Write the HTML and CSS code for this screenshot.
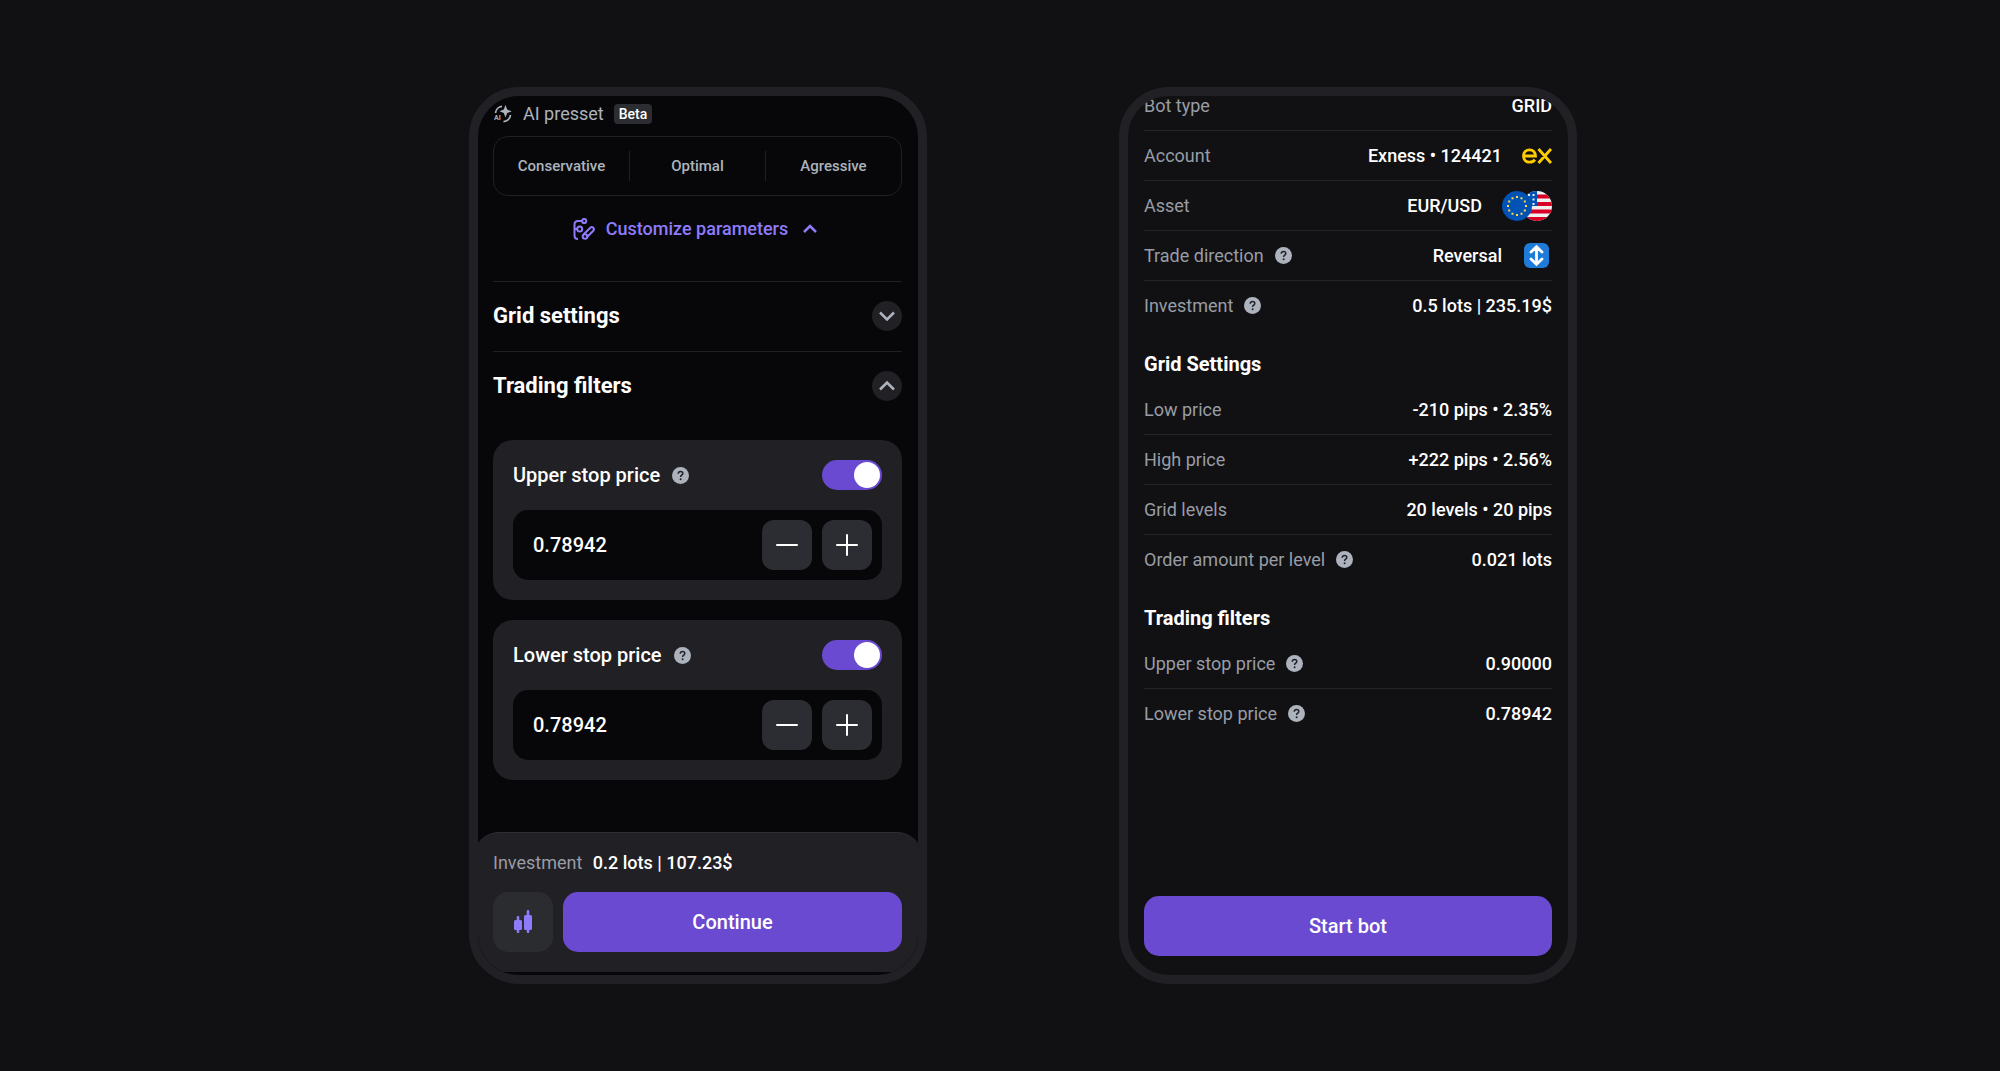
FILE: index.html
```
<!DOCTYPE html>
<html lang="en">
<head>
  <meta charset="UTF-8" />
  <meta name="viewport" content="width=device-width, initial-scale=1.0"/>
  <title>Grid bot setup</title>
  <link rel="stylesheet" href="styles.css">
</head>
<body>
  <!-- shared icons -->
  <svg class="sprite" aria-hidden="true">
    <symbol id="help" viewBox="0 0 17 17">
      <circle cx="8.500" cy="8.500" r="8.500" fill="#adb3bd"/>
      <path d="M6.200 6.700C6.200 5.200 7.200 4.400 8.500 4.400S10.800 5.200 10.800 6.500C10.800 8.200 8.600 8.200 8.600 9.900" fill="none" stroke="#222125" stroke-width="1.500"/>
      <circle cx="8.600" cy="12.200" r="1" fill="#222125"/>
    </symbol>
    <symbol id="minus" viewBox="0 0 22 22">
      <path d="M1 11H21" fill="none" stroke="currentColor" stroke-width="2" stroke-linecap="round"/>
    </symbol>
    <symbol id="plus" viewBox="0 0 22 22">
      <path d="M1 11H21M11 1V21" fill="none" stroke="currentColor" stroke-width="2" stroke-linecap="round"/>
    </symbol>
  </svg>

  <main class="screens">
    <section class="phone phone-setup">
      <div class="setup">
        <div class="preset-title">
          <svg class="ai-icon" viewBox="0 0 18 18" aria-hidden="true">
            <path d="M1.500 8A7.200 7.200 0 0 1 8 1.400M16.500 10A7.200 7.200 0 0 1 9.500 16.600" fill="none" stroke="currentColor" stroke-width="1.700"/>
            <path d="M11.500 0L13.200 4.600L17.800 6.300L13.200 8L11.500 12.600L9.800 8L5.500 6.300L9.800 4.600Z" fill="currentColor"/>
            <text x="0" y="15" font-size="7" font-weight="700" fill="currentColor">AI</text>
          </svg>
          <span>AI presset</span>
          <span class="badge">Beta</span>
        </div>

        <div class="presets">
          <button type="button">Conservative</button>
          <button type="button">Optimal</button>
          <button type="button">Agressive</button>
        </div>

        <button type="button" class="customize">
          <svg class="customize-icon" viewBox="0 0 22 22" fill="none" stroke="currentColor" stroke-width="2" aria-hidden="true">
            <path d="M9 3H5Q1.500 3 1.500 6.500V17.500Q1.500 21 5 21M1.500 11H4"/>
            <circle cx="11.200" cy="3" r="2.100"/>
            <circle cx="6.700" cy="11" r="2.500"/>
            <path d="M10.700 16.300L17.300 9.700Q18.800 8.400 20.200 9.800T20.300 12.800L13.800 19.300"/>
            <circle cx="12" cy="18.500" r="2.300"/>
          </svg>
          <span>Customize parameters</span>
          <svg class="caret" viewBox="0 0 24 24" fill="none" stroke="currentColor" stroke-width="2.500" aria-hidden="true"><path d="M6 15L12 9L18 15"/></svg>
        </button>

        <div class="accordion">
          <h2>Grid settings</h2>
          <button type="button" class="round" aria-label="Expand grid settings">
            <svg viewBox="0 0 16 16" fill="none" stroke="currentColor" stroke-width="2.500" aria-hidden="true"><path d="M1 4.500L8 11.500L15 4.500"/></svg>
          </button>
        </div>
        <div class="accordion">
          <h2>Trading filters</h2>
          <button type="button" class="round" aria-label="Collapse trading filters">
            <svg viewBox="0 0 16 16" fill="none" stroke="currentColor" stroke-width="2.500" aria-hidden="true"><path d="M1 11.500L8 4.500L15 11.500"/></svg>
          </button>
        </div>

        <div class="filters">
          <div class="card">
            <div class="card-head">
              <label for="upperOn">Upper stop price</label>
              <svg class="help"><use href="#help"/></svg>
              <input type="checkbox" id="upperOn" class="toggle" checked>
            </div>
            <div class="stepper">
              <input type="text" value="0.78942" aria-label="Upper stop price value">
              <button type="button" aria-label="Decrease"><svg><use href="#minus"/></svg></button>
              <button type="button" aria-label="Increase"><svg><use href="#plus"/></svg></button>
            </div>
          </div>
          <div class="card">
            <div class="card-head">
              <label for="lowerOn">Lower stop price</label>
              <svg class="help"><use href="#help"/></svg>
              <input type="checkbox" id="lowerOn" class="toggle" checked>
            </div>
            <div class="stepper">
              <input type="text" value="0.78942" aria-label="Lower stop price value">
              <button type="button" aria-label="Decrease"><svg><use href="#minus"/></svg></button>
              <button type="button" aria-label="Increase"><svg><use href="#plus"/></svg></button>
            </div>
          </div>
        </div>
      </div>

      <footer class="bottom-bar">
        <p><span>Investment</span> <strong>0.2 lots | 107.23$</strong></p>
        <div class="actions">
          <button type="button" class="chart" aria-label="Chart">
            <svg viewBox="0 0 18 24" fill="currentColor" aria-hidden="true">
              <rect x="0" y="10" width="8" height="10" rx="1.500"/>
              <rect x="2.700" y="6" width="2.600" height="17" rx="1"/>
              <rect x="10" y="5" width="8" height="15" rx="1.500"/>
              <rect x="12.700" y="0" width="2.600" height="23" rx="1"/>
            </svg>
          </button>
          <button type="button" class="primary">Continue</button>
        </div>
      </footer>
    </section>

    <section class="phone phone-summary">
      <dl class="summary">
        <div><dt>Bot type</dt><dd>GRID</dd></div>
        <div>
          <dt>Account</dt>
          <dd>Exness • 124421
            <svg class="ex-logo" viewBox="0 0 30 16" fill="none" stroke="#fc0" stroke-width="2.800" role="img" aria-label="Exness">
              <path d="M1.500 8H13.500C13.500 4 11 1.800 7.500 1.800S1.500 4.500 1.500 8S4 14.200 7.500 14.200C9.900 14.200 11.700 13.300 12.900 11.600M16.500 1L29 15M29 1L16.500 15"/>
            </svg>
          </dd>
        </div>
        <div>
          <dt>Asset</dt>
          <dd>EUR/USD
            <svg class="flags" viewBox="0 0 50 30" aria-hidden="true">
              <clipPath id="usd"><circle cx="35" cy="15" r="15"/></clipPath>
              <g clip-path="url(#usd)">
                <path fill="#f0f0f0" d="M20 0H50V30H20z"/>
                <path stroke="#d80027" stroke-width="3.800" d="M20 5.500H50M20 13H50M20 20.500H50M20 28H50"/>
                <path fill="#0052b4" d="M20 0H35V15H20z"/>
                <path stroke="#f0f0f0" stroke-width="2" stroke-dasharray="2 2.500" d="M27 3V14M31.500 3V14"/>
              </g>
              <circle cx="15" cy="15" r="15" fill="#0052b4"/>
              <g fill="#ffda44">
                <path d="M14 5h2v2h-2zM14 23h2v2h-2zM5 14h2v2h-2zM23 14h2v2h-2zM9.500 6.200h2v2h-2zM18.500 6.200h2v2h-2zM9.500 21.800h2v2h-2zM18.500 21.800h2v2h-2zM6.200 9.500h2v2h-2zM21.800 9.500h2v2h-2zM6.200 18.500h2v2h-2zM21.800 18.500h2v2h-2z"/>
              </g>
            </svg>
          </dd>
        </div>
        <div>
          <dt>Trade direction <svg class="help"><use href="#help"/></svg></dt>
          <dd>Reversal
            <svg class="direction" viewBox="0 0 30 26" aria-hidden="true">
              <rect x="2" y="0" width="25" height="25" rx="6" fill="#1f7bd8"/>
              <path d="M14.500 4V21M9 9L14.500 3.800L20 9M9 16L14.500 21.200L20 16" fill="none" stroke="#fff" stroke-width="2.800" stroke-linecap="round"/>
            </svg>
          </dd>
        </div>
        <div><dt>Investment <svg class="help"><use href="#help"/></svg></dt><dd>0.5 lots | 235.19$</dd></div>
      </dl>

      <h3>Grid Settings</h3>
      <dl class="summary">
        <div><dt>Low price</dt><dd>-210 pips • 2.35%</dd></div>
        <div><dt>High price</dt><dd>+222 pips • 2.56%</dd></div>
        <div><dt>Grid levels</dt><dd>20 levels • 20 pips</dd></div>
        <div><dt>Order amount per level <svg class="help"><use href="#help"/></svg></dt><dd>0.021 lots</dd></div>
      </dl>

      <h3>Trading filters</h3>
      <dl class="summary">
        <div><dt>Upper stop price <svg class="help"><use href="#help"/></svg></dt><dd>0.90000</dd></div>
        <div><dt>Lower stop price <svg class="help"><use href="#help"/></svg></dt><dd>0.78942</dd></div>
      </dl>

      <button type="button" class="primary start">Start bot</button>
    </section>
  </main>
</body>
</html>
```
FILE: styles.css
```
:root {
  --page: #111113;
  --screen: #070709;
  --surface: #212024;
  --control: #2c2d32;
  --line: #202023;
  --primary: #6a4ad0;
  --accent: #8e7bfa;
  --text: #ffffff;
  --soft: #adb3bd;
  --muted: #989da6;
}

* {
  margin: 0;
  padding: 0;
  box-sizing: border-box;
}

body {
  background: var(--page);
  color: var(--text);
  font-family: Roboto, sans-serif;
  font-size: 18px;
  line-height: 24px;
}

button,
input {
  font: inherit;
  color: inherit;
  border: none;
  background: none;
}

button {
  cursor: pointer;
}

svg {
  display: block;
  flex-shrink: 0;
}

.sprite {
  position: absolute;
  width: 0;
  height: 0;
}

.screens {
  min-height: 100vh;
  display: flex;
  justify-content: center;
  gap: 192px;
  padding: 87px 0 87px 46px;
}

.phone {
  width: 458px;
  border: 9px solid var(--surface);
  border-radius: 50px;
  overflow: hidden;
  display: flex;
  flex-direction: column;
}

.help {
  width: 17px;
  height: 17px;
}

.primary {
  height: 60px;
  border-radius: 15px;
  background: var(--primary);
  font-size: 20px;
  font-weight: 500;
}

/* setup screen */
.phone-setup {
  background: var(--screen);
}

.setup {
  padding: 8px 16px 40px 15px;
}

.preset-title {
  display: flex;
  align-items: center;
  height: 20px;
  color: var(--soft);
}

.ai-icon {
  width: 18px;
  height: 18px;
  margin: 0 11px 0 1px;
}

.badge {
  margin-left: 10px;
  padding: 0 5px;
  border-radius: 4px;
  background: var(--control);
  color: var(--text);
  font-size: 14px;
  font-weight: 500;
  line-height: 20px;
}

.presets {
  display: flex;
  align-items: center;
  height: 60px;
  margin-top: 12px;
  border: 1px solid var(--line);
  border-radius: 15px;
}

.presets button {
  flex: 1;
  height: 30px;
  color: var(--soft);
  font-size: 15px;
  font-weight: 500;
}

.presets button + button {
  border-left: 1px solid var(--line);
}

.customize {
  display: flex;
  align-items: center;
  justify-content: center;
  width: 100%;
  height: 30px;
  margin: 18px 0 37px;
  color: var(--accent);
  font-weight: 500;
}

.customize-icon {
  width: 22px;
  height: 22px;
  margin-right: 11px;
}

.caret {
  width: 24px;
  height: 24px;
  margin-left: 10px;
}

.accordion {
  display: flex;
  align-items: center;
  justify-content: space-between;
  padding: 19px 0 20px;
  border-top: 1px solid var(--line);
}

.accordion h2 {
  font-size: 22px;
  font-weight: 700;
}

.round {
  display: grid;
  place-items: center;
  width: 30px;
  height: 30px;
  border-radius: 50%;
  background: var(--surface);
  color: var(--soft);
}

.round svg {
  width: 16px;
  height: 16px;
}

.filters {
  display: flex;
  flex-direction: column;
  gap: 20px;
  margin-top: 19px;
}

.card {
  padding: 20px;
  border-radius: 20px;
  background: var(--surface);
}

.card-head {
  display: flex;
  align-items: center;
  gap: 12px;
  font-size: 20px;
  font-weight: 500;
}

.toggle {
  appearance: none;
  width: 60px;
  height: 30px;
  margin-left: auto;
  padding: 2px;
  border-radius: 15px;
  background: var(--control);
  cursor: pointer;
}

.toggle::before {
  content: "";
  display: block;
  width: 26px;
  height: 26px;
  border-radius: 50%;
  background: #fff;
}

.toggle:checked {
  background: var(--primary);
}

.toggle:checked::before {
  margin-left: auto;
}

.stepper {
  display: flex;
  align-items: center;
  gap: 10px;
  margin-top: 20px;
  padding: 10px 10px 10px 20px;
  border-radius: 15px;
  background: var(--screen);
  font-size: 20px;
  font-weight: 500;
}

.stepper input {
  flex: 1;
  min-width: 0;
  outline: none;
}

.stepper button {
  display: grid;
  place-items: center;
  width: 50px;
  height: 50px;
  border-radius: 12px;
  background: var(--control);
}

.stepper svg {
  width: 22px;
  height: 22px;
}

/* wider than the screen so the corners start under the frame */
.bottom-bar {
  margin: auto -4px 3px;
  padding: 18px 20px 20px 19px;
  border-top: 1px solid #2f2f33;
  border-radius: 25px 25px 0 0;
  background: var(--surface);
}

.bottom-bar p {
  color: var(--muted);
}

.bottom-bar strong {
  margin-left: 6px;
  color: var(--text);
  font-weight: 500;
}

.actions {
  display: flex;
  gap: 10px;
  margin-top: 17px;
}

.actions .primary {
  flex: 1;
}

.chart {
  display: grid;
  place-items: center;
  width: 60px;
  height: 60px;
  border-radius: 15px;
  background: #2b2c30;
  color: var(--accent);
}

.chart svg {
  width: 18px;
  height: 24px;
}

/* summary screen, scrolled down a little */
.phone-summary {
  padding: 0 16px 19px;
}

.summary:first-child {
  margin-top: -15px;
}

.summary div {
  display: flex;
  align-items: center;
  justify-content: space-between;
  height: 50px;
  border-bottom: 1px solid #252528;
}

.summary div:last-child {
  border-bottom-color: transparent;
}

.summary dt {
  display: flex;
  align-items: center;
  gap: 11px;
  color: var(--muted);
}

.summary dd {
  display: flex;
  align-items: center;
  gap: 20px;
  font-weight: 500;
}

.phone-summary h3 {
  margin: 21px 0 9px;
  font-size: 20px;
  font-weight: 700;
}

.ex-logo {
  width: 30px;
  height: 16px;
}

.flags {
  width: 50px;
  height: 30px;
}

.direction {
  width: 30px;
  height: 26px;
}

.start {
  width: 100%;
  margin-top: auto;
}
```
